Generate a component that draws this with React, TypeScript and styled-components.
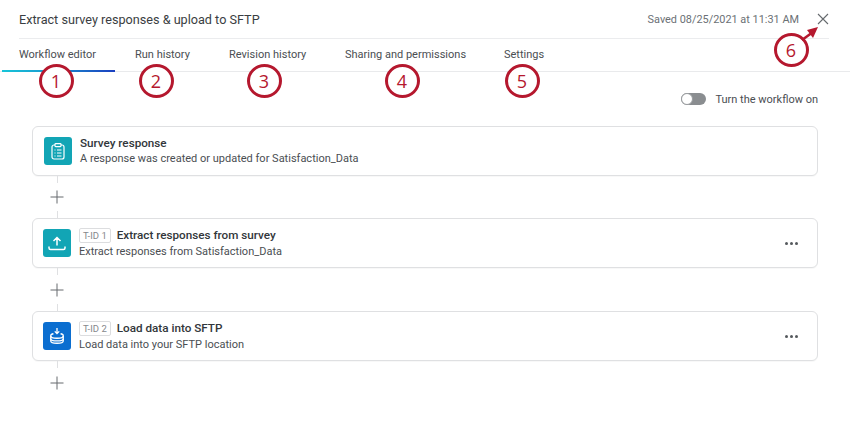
import styled, { createGlobalStyle } from "styled-components";

const GlobalStyle = createGlobalStyle`
  html, body {
    margin: 0;
    padding: 0;
    background: #fff;
    font-family: Roboto, "Liberation Sans", sans-serif;
    color: #32363a;
  }
`;

const Page = styled.div`
  position: relative;
  width: 850px;
  height: 425px;
  overflow: hidden;
`;

const Header = styled.header`
  height: 38px;
  margin: 0 21px 0 19px;
  display: flex;
  align-items: center;
  justify-content: space-between;
  border-bottom: 1px solid #ebecee;
`;

const Title = styled.h1`
  margin: 0;
  font-size: 12.65px;
  font-weight: 400;
  color: #3a3e42;
`;

const HeaderRight = styled.div`
  display: flex;
  align-items: center;
  gap: 18px;
`;

const Saved = styled.span`
  font-size: 10.9px;
  color: #6b7075;
`;

const CloseIcon = styled.svg`
  width: 12px;
  height: 12px;
  display: block;
`;

const Tabs = styled.nav`
  height: 32px;
  display: flex;
  border-bottom: 1px solid #e9eaec;
`;

const Tab = styled.div<{ $width: number; $active?: boolean; $pad: number }>`
  position: relative;
  width: ${(p) => p.$width}px;
  padding-left: ${(p) => p.$pad}px;
  box-sizing: border-box;
  font-size: 11px;
  line-height: 32px;
  color: #4a4e52;

  ${(p) =>
    p.$active &&
    `
    margin-left: 2px;
    &::after {
      content: "";
      position: absolute;
      left: 0;
      right: 0;
      bottom: -1px;
      height: 2px;
      background: linear-gradient(90deg, #17c5d8 0%, #1a9bd0 40%, #1a3fc0 100%);
    }
  `}
`;

const ToggleRow = styled.div`
  height: 54px;
  padding: 0 32px 0 0;
  display: flex;
  align-items: center;
  justify-content: flex-end;
  gap: 9px;
`;

const Toggle = styled.div`
  position: relative;
  width: 25px;
  height: 12px;
  border-radius: 6px;
  background: #8a8d90;

  &::after {
    content: "";
    position: absolute;
    left: 0;
    top: 0;
    width: 12px;
    height: 12px;
    box-sizing: border-box;
    border-radius: 50%;
    background: #fff;
    border: 1px solid #9a9da0;
  }
`;

const ToggleLabel = styled.span`
  font-size: 11px;
  color: #4a4e52;
`;

const Flow = styled.div`
  margin: 0 32px;
  display: flex;
  flex-direction: column;
`;

const Card = styled.div<{ $pad: number }>`
  height: 50px;
  box-sizing: border-box;
  border: 1px solid #dfe0e2;
  border-radius: 6px;
  background: #fff;
  display: flex;
  align-items: center;
  padding: 0 19px 0 ${(p) => p.$pad}px;
  box-shadow: 0 1px 1px rgba(0, 0, 0, 0.03);
`;

const IconTile = styled.div<{ $color: string }>`
  width: 28px;
  height: 28px;
  border-radius: 3px;
  background: ${(p) => p.$color};
  display: flex;
  align-items: center;
  justify-content: center;
  flex: none;
`;

const CardBody = styled.div`
  margin-left: 8px;
  flex: 1;
  display: flex;
  flex-direction: column;
  gap: 2px;
`;

const CardTop = styled.div`
  display: flex;
  align-items: center;
  gap: 6px;
`;

const CardTitle = styled.strong`
  font-size: 11.7px;
  line-height: 14px;
  font-weight: 500;
  color: #32363a;
`;

const CardText = styled.div`
  font-size: 11px;
  line-height: 14px;
  color: #4a4e52;
`;

const TaskId = styled.span`
  font-size: 9.5px;
  line-height: 11px;
  padding: 1px 3px;
  border: 1px solid #dcdddf;
  border-radius: 2px;
  color: #85888b;
`;

const More = styled.div`
  display: flex;
  gap: 2px;
`;

const Dot = styled.i`
  width: 3px;
  height: 3px;
  border-radius: 50%;
  background: #55595d;
`;

const Connector = styled.div<{ $height: number; $end?: boolean }>`
  width: 50px;
  height: ${(p) => p.$height}px;
  position: relative;
  display: flex;
  align-items: center;
  justify-content: center;

  &::before,
  &::after {
    content: "";
    position: absolute;
    left: 25px;
    width: 1px;
    height: 7px;
    background: #dfe0e2;
  }
  &::before {
    top: 0;
  }
  &::after {
    bottom: 0;
    display: ${(p) => (p.$end ? "none" : "block")};
  }
`;

const Badge = styled.div<{ $x: number; $y: number }>`
  position: absolute;
  left: ${(p) => p.$x - 17.5}px;
  top: ${(p) => p.$y - 17}px;
  width: 35px;
  height: 34px;
  box-sizing: border-box;
  border: 3px solid #b5182e;
  border-radius: 50%;
  background: #fff;
  color: #b5182e;
  display: flex;
  align-items: center;
  justify-content: center;
  font-family: "Open Sans", sans-serif;
  font-size: 18px;
`;

const ArrowOverlay = styled.svg`
  position: absolute;
  left: 795px;
  top: 20px;
  width: 30px;
  height: 25px;
`;

const Plus = () => (
  <svg width="14" height="14" viewBox="0 0 14 14">
    <path d="M7 0.500v13M0.500 7h13" stroke="#666a6e" strokeWidth="1" fill="none" />
  </svg>
);

const Dots = () => (
  <More>
    <Dot />
    <Dot />
    <Dot />
  </More>
);

export default function App() {
  return (
    <Page>
      <GlobalStyle />
      <Header>
        <Title>Extract survey responses &amp; upload to SFTP</Title>
        <HeaderRight>
          <Saved>Saved 08/25/2021 at 11:31 AM</Saved>
          <CloseIcon viewBox="0 0 12 12">
            <path d="M1 1l10 10M11 1L1 11" stroke="#666a6e" strokeWidth="1.1" />
          </CloseIcon>
        </HeaderRight>
      </Header>
      <Tabs>
        <Tab $width={113} $pad={17} $active>
          Workflow editor
        </Tab>
        <Tab $width={114} $pad={20}>Run history</Tab>
        <Tab $width={116} $pad={0}>Revision history</Tab>
        <Tab $width={159} $pad={0}>Sharing and permissions</Tab>
        <Tab $width={100} $pad={0}>Settings</Tab>
      </Tabs>
      <ToggleRow>
        <Toggle />
        <ToggleLabel>Turn the workflow on</ToggleLabel>
      </ToggleRow>
      <Flow>
        <Card $pad={11}>
          <IconTile $color="#12a5b5">
            <svg width="14" height="17" viewBox="0 0 14 17" fill="none" stroke="#fff" strokeWidth="1.2">
              <rect x="1" y="2" width="12" height="14" rx="2" />
              <rect x="4" y="0.600" width="6" height="3" rx="0.800" fill="#12a5b5" />
              <path d="M3.500 7h1M3.500 10h1M3.500 13h1M6 7h4.500M6 10h4.500M6 13h4.500" />
            </svg>
          </IconTile>
          <CardBody>
            <CardTitle>Survey response</CardTitle>
            <CardText>A response was created or updated for Satisfaction_Data</CardText>
          </CardBody>
        </Card>
        <Connector $height={42}>
          <Plus />
        </Connector>
        <Card $pad={10}>
          <IconTile $color="#12a5b5">
            <svg width="20" height="20" viewBox="0 0 20 20" fill="none" stroke="#fff" strokeWidth="1.5">
              <path d="M10 12.500V5M6.500 8L10 4.500 13.500 8M2 13.500V15c0 1 .8 1.500 1.500 1.500h13c.7 0 1.500-.5 1.500-1.500v-1.500" />
            </svg>
          </IconTile>
          <CardBody>
            <CardTop>
              <TaskId>T-ID 1</TaskId>
              <CardTitle>Extract responses from survey</CardTitle>
            </CardTop>
            <CardText>Extract responses from Satisfaction_Data</CardText>
          </CardBody>
          <Dots />
        </Card>
        <Connector $height={43}>
          <Plus />
        </Connector>
        <Card $pad={10}>
          <IconTile $color="#0b6ed0">
            <svg width="16" height="20" viewBox="0 0 18 20" fill="none" stroke="#fff" strokeWidth="1.500">
              <path d="M9 1v6M6.500 4.800L9 7.300l2.500-2.500" />
              <path d="M5 7.500c-1.800.3-3 1-3 2v6c0 1.500 3.100 2.700 7 2.700s7-1.200 7-2.700v-6c0-1-1.200-1.700-3-2" />
              <path d="M2 10c0 1.500 3.100 2.500 7 2.500s7-1 7-2.500M2 13c0 1.500 3.100 2.500 7 2.500s7-1 7-2.500" />
            </svg>
          </IconTile>
          <CardBody>
            <CardTop>
              <TaskId>T-ID 2</TaskId>
              <CardTitle>Load data into SFTP</CardTitle>
            </CardTop>
            <CardText>Load data into your SFTP location</CardText>
          </CardBody>
          <Dots />
        </Card>
        <Connector $height={43} $end>
          <Plus />
        </Connector>
      </Flow>
      <Badge $x={56} $y={81}>1</Badge>
      <Badge $x={156} $y={81}>2</Badge>
      <Badge $x={264} $y={81}>3</Badge>
      <Badge $x={402} $y={81}>4</Badge>
      <Badge $x={522} $y={81}>5</Badge>
      <Badge $x={791} $y={50}>6</Badge>
      <ArrowOverlay viewBox="0 0 30 25">
        <path d="M7 20L18 12" stroke="#b5182e" strokeWidth="2.500" fill="none" />
        <path d="M23 7L12 10l6 8z" fill="#b5182e" />
      </ArrowOverlay>
    </Page>
  );
}
